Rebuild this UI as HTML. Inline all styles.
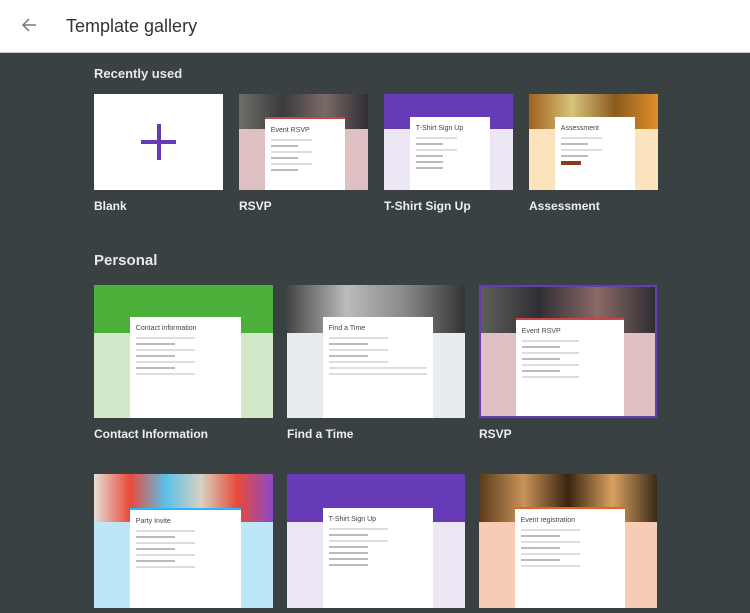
<!DOCTYPE html>
<html><head><meta charset="utf-8"><style>
*{margin:0;padding:0;box-sizing:border-box}
body{width:750px;height:613px;overflow:hidden;background:#3a4142;font-family:"Liberation Sans",Arial,sans-serif;position:relative}
.hdr{position:absolute;left:0;top:0;width:750px;height:53px;background:#fff;border-bottom:1px solid #ccc}
.hdr .t{position:absolute;left:66px;top:16px;font-size:18px;color:#333}
.hdr svg{position:absolute;left:21px;top:17px}
.sec{position:absolute;left:94px;color:#e8e8e8;font-weight:bold}
.card{position:absolute;overflow:hidden}
.band{position:absolute;left:0;top:0;width:100%}
.panel{position:absolute;background:#fff;bottom:0;left:20%;right:18%;padding:6px 6px;font-size:5px;color:#555}
.panel .h{font-size:7px;color:#444;margin:2px 0 5px}
.ln{height:2px;background:#ddd;margin:4px 0;width:60%}
.ln.s{width:40%;background:#bbb}
.lbl{position:absolute;color:#eee;font-weight:bold;font-size:12px}
</style></head><body>
<div class="hdr"><svg width="16" height="16" viewBox="0 0 16 16"><path d="M15 8H2M8 2L2 8l6 6" stroke="#777" stroke-width="1.5" fill="none"/></svg><div class="t">Template gallery</div></div>
<div class="sec" style="top:66px;font-size:13px">Recently used</div>

<div class="card" style="left:94px;top:94px;width:129px;height:96px;background:#fff"><div style="position:absolute;left:47px;top:46px;width:35px;height:4px;background:#673ab7"></div><div style="position:absolute;left:63px;top:30px;width:4px;height:36px;background:#673ab7"></div></div>
<div class="card" style="left:239px;top:94px;width:129px;height:96px;background:#dfc1c3"><div class="band" style="height:35px;background:linear-gradient(90deg,#6e6e6a,#3b3a3c,#7a6a66,#2f2e34)"></div><div class="panel" style="top:23px;border-top:2px solid #c44"><div class="h">Event RSVP</div><div class="ln"></div><div class="ln s"></div><div class="ln"></div><div class="ln s"></div><div class="ln"></div><div class="ln s"></div></div></div>
<div class="card" style="left:384px;top:94px;width:129px;height:96px;background:#ede7f5"><div class="band" style="height:35px;background:#673ab7"></div><div class="panel" style="top:23px"><div class="h">T-Shirt Sign Up</div><div class="ln"></div><div class="ln s"></div><div class="ln"></div><div class="ln s"></div><div class="ln s"></div><div class="ln s"></div></div></div>
<div class="card" style="left:529px;top:94px;width:129px;height:96px;background:#fbe3bd"><div class="band" style="height:35px;background:linear-gradient(90deg,#a0601e,#d7c37a,#8b5a1e,#e0902a)"></div><div class="panel" style="top:23px"><div class="h">Assessment</div><div class="ln"></div><div class="ln s"></div><div class="ln"></div><div class="ln s"></div><div class="ln" style="background:#8b3a1a;width:30%;height:4px"></div></div></div>
<div class="lbl" style="left:94px;top:199px">Blank</div>
<div class="lbl" style="left:239px;top:199px">RSVP</div>
<div class="lbl" style="left:384px;top:199px">T-Shirt Sign Up</div>
<div class="lbl" style="left:529px;top:199px">Assessment</div>

<div class="sec" style="top:252px;font-size:15px">Personal</div>

<div class="card" style="left:94px;top:285px;width:179px;height:133px;background:#d2e8c8"><div class="band" style="height:48px;background:#4caf3a"></div><div class="panel" style="top:32px"><div class="h">Contact information</div><div class="ln"></div><div class="ln s"></div><div class="ln"></div><div class="ln s"></div><div class="ln"></div><div class="ln s"></div><div class="ln"></div></div></div>
<div class="card" style="left:287px;top:285px;width:178px;height:133px;background:#e8ecee"><div class="band" style="height:48px;background:linear-gradient(90deg,#444,#bbb,#888,#333)"></div><div class="panel" style="top:32px"><div class="h">Find a Time</div><div class="ln"></div><div class="ln s"></div><div class="ln"></div><div class="ln s"></div><div class="ln"></div><div class="ln" style="width:100%"></div><div class="ln" style="width:100%"></div></div></div>
<div class="card" style="left:479px;top:285px;width:178px;height:133px;background:#dfc1c3;border:2px solid #673ab7"><div class="band" style="height:46px;background:linear-gradient(90deg,#5e5e5a,#2f2e34,#8a6a66,#2f2e34)"></div><div class="panel" style="top:31px;border-top:2px solid #c44"><div class="h">Event RSVP</div><div class="ln"></div><div class="ln s"></div><div class="ln"></div><div class="ln s"></div><div class="ln"></div><div class="ln s"></div><div class="ln"></div></div></div>
<div class="lbl" style="left:94px;top:427px">Contact Information</div>
<div class="lbl" style="left:287px;top:427px">Find a Time</div>
<div class="lbl" style="left:479px;top:427px">RSVP</div>

<div class="card" style="left:94px;top:474px;width:179px;height:134px;background:#bde6f6"><div class="band" style="height:48px;background:linear-gradient(90deg,#e6e0d6,#e84a3a,#5bc0e8,#d8d0c0,#e84a3a,#8a4ac8)"></div><div class="panel" style="top:34px;border-top:2px solid #29b6f6"><div class="h">Party Invite</div><div class="ln"></div><div class="ln s"></div><div class="ln"></div><div class="ln s"></div><div class="ln"></div><div class="ln s"></div><div class="ln"></div></div></div>
<div class="card" style="left:287px;top:474px;width:178px;height:134px;background:#ede7f5"><div class="band" style="height:48px;background:#673ab7"></div><div class="panel" style="top:34px"><div class="h">T-Shirt Sign Up</div><div class="ln"></div><div class="ln s"></div><div class="ln"></div><div class="ln s"></div><div class="ln s"></div><div class="ln s"></div><div class="ln s"></div></div></div>
<div class="card" style="left:479px;top:474px;width:178px;height:134px;background:#f6cdb4"><div class="band" style="height:48px;background:linear-gradient(90deg,#5a3a1a,#c8935a,#3a2410,#d8a060,#3a2a1a)"></div><div class="panel" style="top:33px;border-top:2px solid #e5622a"><div class="h">Event registration</div><div class="ln"></div><div class="ln s"></div><div class="ln"></div><div class="ln s"></div><div class="ln"></div><div class="ln s"></div><div class="ln"></div></div></div>
</body></html>
